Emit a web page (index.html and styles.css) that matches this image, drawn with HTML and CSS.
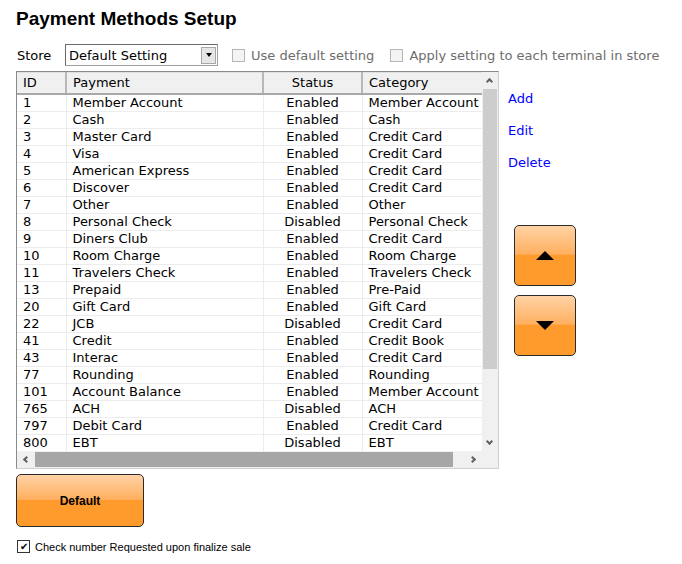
FILE: index.html
```html
<!DOCTYPE html>
<html lang="en">
<head>
    <meta charset="UTF-8">
    <title>Payment Methods Setup</title>
    <link rel="stylesheet" href="styles.css">
</head>
<body>
    <h1>Payment Methods Setup</h1>

    <div class="toolbar">
        <span class="store-label">Store</span>
        <div class="select">
            <span class="select-value">Default Setting</span>
            <span class="select-btn"><span class="caret"></span></span>
        </div>
        <label class="check disabled"><span class="box"></span>Use default setting</label>
        <label class="check disabled"><span class="box"></span>Apply setting to each terminal in store</label>
    </div>

    <div class="main">
        <div class="grid">
            <div class="grid-top">
                <div class="grid-view">
                    <table>
                        <thead>
                            <tr>
                                <th class="c-id">ID</th>
                                <th class="c-pay">Payment</th>
                                <th class="c-status">Status</th>
                                <th class="c-cat">Category</th>
                            </tr>
                        </thead>
                        <tbody>
                            <tr><td>1</td><td>Member Account</td><td class="center">Enabled</td><td>Member Account</td></tr>
                            <tr><td>2</td><td>Cash</td><td class="center">Enabled</td><td>Cash</td></tr>
                            <tr><td>3</td><td>Master Card</td><td class="center">Enabled</td><td>Credit Card</td></tr>
                            <tr><td>4</td><td>Visa</td><td class="center">Enabled</td><td>Credit Card</td></tr>
                            <tr><td>5</td><td>American Express</td><td class="center">Enabled</td><td>Credit Card</td></tr>
                            <tr><td>6</td><td>Discover</td><td class="center">Enabled</td><td>Credit Card</td></tr>
                            <tr><td>7</td><td>Other</td><td class="center">Enabled</td><td>Other</td></tr>
                            <tr><td>8</td><td>Personal Check</td><td class="center">Disabled</td><td>Personal Check</td></tr>
                            <tr><td>9</td><td>Diners Club</td><td class="center">Enabled</td><td>Credit Card</td></tr>
                            <tr><td>10</td><td>Room Charge</td><td class="center">Enabled</td><td>Room Charge</td></tr>
                            <tr><td>11</td><td>Travelers Check</td><td class="center">Enabled</td><td>Travelers Check</td></tr>
                            <tr><td>13</td><td>Prepaid</td><td class="center">Enabled</td><td>Pre-Paid</td></tr>
                            <tr><td>20</td><td>Gift Card</td><td class="center">Enabled</td><td>Gift Card</td></tr>
                            <tr><td>22</td><td>JCB</td><td class="center">Disabled</td><td>Credit Card</td></tr>
                            <tr><td>41</td><td>Credit</td><td class="center">Enabled</td><td>Credit Book</td></tr>
                            <tr><td>43</td><td>Interac</td><td class="center">Enabled</td><td>Credit Card</td></tr>
                            <tr><td>77</td><td>Rounding</td><td class="center">Enabled</td><td>Rounding</td></tr>
                            <tr><td>101</td><td>Account Balance</td><td class="center">Enabled</td><td>Member Account</td></tr>
                            <tr><td>765</td><td>ACH</td><td class="center">Disabled</td><td>ACH</td></tr>
                            <tr><td>797</td><td>Debit Card</td><td class="center">Enabled</td><td>Credit Card</td></tr>
                            <tr><td>800</td><td>EBT</td><td class="center">Disabled</td><td>EBT</td></tr>
                        </tbody>
                    </table>
                </div>
                <div class="vscroll">
                    <span class="chev up"></span>
                    <span class="vthumb"></span>
                    <span class="chev down"></span>
                </div>
            </div>
            <div class="grid-bottom">
                <div class="hscroll">
                    <span class="chev left"></span>
                    <span class="hthumb"></span>
                    <span class="chev right"></span>
                </div>
                <div class="corner"></div>
            </div>
        </div>

        <div class="side">
            <a href="#" class="link">Add</a>
            <a href="#" class="link">Edit</a>
            <a href="#" class="link">Delete</a>
            <div class="move-btns">
                <button class="orange-btn move-btn"><span class="tri tri-up"></span></button>
                <button class="orange-btn move-btn"><span class="tri tri-down"></span></button>
            </div>
        </div>
    </div>

    <button class="orange-btn default-btn">Default</button>

    <label class="check small"><span class="box checked">&#10004;</span>Check number Requested upon finalize sale</label>
</body>
</html>
```

FILE: styles.css
```css
* {
    margin: 0;
    padding: 0;
    box-sizing: border-box;
}

body {
    background: white;
    padding: 8px 16px;
    font-family: "DejaVu Sans", Verdana, sans-serif;
    font-size: 13px;
    color: #000;
}

h1 {
    font-family: "Liberation Sans", Arial, sans-serif;
    font-size: 19px;
    font-weight: bold;
    line-height: 22px;
    height: 36px;
}

/* store row */
.toolbar {
    display: flex;
    align-items: center;
    height: 22px;
    margin-bottom: 5px;
}

.store-label {
    margin-left: 1px;
    width: 48px;
}

.select {
    display: flex;
    align-items: center;
    justify-content: space-between;
    width: 153px;
    height: 22px;
    border: 1px solid #a0a0a0;
    border-top-color: #6a6a6a;
    border-left-color: #6a6a6a;
    padding: 0 1px 0 3px;
}

.select-btn {
    width: 15px;
    height: 17px;
    background: #e6e6e6;
    border: 1px solid #a8a8a8;
    display: flex;
    align-items: center;
    justify-content: center;
}

.caret {
    border-left: 3px solid transparent;
    border-right: 3px solid transparent;
    border-top: 4px solid #000;
}

.check {
    display: flex;
    align-items: center;
    gap: 6px;
    color: #6d6d6d;
    margin-left: 14px;
}

.check + .check {
    margin-left: 16px;
}

.box {
    width: 13px;
    height: 13px;
    border: 1px solid #b5b5b5;
    background: #f4f4f4;
}

/* grid */
.main {
    display: flex;
    align-items: flex-start;
}

.grid {
    width: 483px;
    border: 1px solid #8a8a8a;
    border-right-color: #d0d0d0;
    border-bottom-color: #d0d0d0;
}

.grid-top {
    display: flex;
}

.grid-view {
    width: 465px;
    height: 379px;
    overflow: hidden;
}

table {
    border-collapse: collapse;
    table-layout: fixed;
    width: 520px;
}

th {
    height: 21px;
    font-weight: normal;
    text-align: left;
    padding: 0 6px;
    background: #f0f0f0;
    border-left: 2px solid #b8b8b8;
    border-bottom: 2px solid #a8a8a8;
    border-top: 1px solid #e0e0e0;
    white-space: nowrap;
}

th.c-id {
    border-left: none;
}

th.c-status {
    text-align: center;
}

.c-id { width: 49px; }
.c-pay { width: 197px; }
.c-status { width: 99px; }
.c-cat { width: 175px; }

td {
    height: 17px;
    line-height: 16px;
    padding: 0 6px;
    border-left: 1px solid #ececec;
    border-bottom: 1px solid #ececec;
    white-space: nowrap;
    overflow: hidden;
}

td:first-child {
    border-left: none;
}

td.center {
    text-align: center;
}

/* scroll bars */
.vscroll {
    width: 16px;
    height: 379px;
    background: #f0f0f0;
    position: relative;
}

.vthumb {
    position: absolute;
    left: 1px;
    right: 1px;
    top: 17px;
    height: 280px;
    background: #cdcdcd;
}

.grid-bottom {
    display: flex;
    height: 17px;
}

.hscroll {
    width: 465px;
    background: #f0f0f0;
    position: relative;
}

.hthumb {
    position: absolute;
    top: 1px;
    bottom: 1px;
    left: 18px;
    width: 418px;
    background: #a6a6a6;
}

.corner {
    width: 16px;
    background: #f0f0f0;
}

.chev {
    position: absolute;
    width: 5px;
    height: 5px;
    border-left: 2px solid #606060;
    border-top: 2px solid #606060;
}

.chev.up {
    left: 5px;
    top: 7px;
    transform: rotate(45deg);
}

.chev.down {
    left: 5px;
    bottom: 7px;
    transform: rotate(225deg);
}

.chev.left {
    left: 7px;
    top: 6px;
    transform: rotate(-45deg);
}

.chev.right {
    right: 7px;
    top: 6px;
    transform: rotate(135deg);
}

/* side actions */
.side {
    display: flex;
    flex-direction: column;
    align-items: flex-start;
    margin-left: 9px;
    padding-top: 20px;
}

.link {
    color: #0000ff;
    text-decoration: none;
    line-height: 16px;
    margin-bottom: 16px;
}

.move-btns {
    display: flex;
    flex-direction: column;
    gap: 9px;
    margin-top: 38px;
    margin-left: 6px;
}

.orange-btn {
    border: 1px solid #2a2a2a;
    border-radius: 5px;
    background: linear-gradient(to bottom, #ffd3a6 0%, #ffaf5f 48%, #ff9a2c 49%, #ff9a2c 100%);
    cursor: pointer;
    display: flex;
    align-items: center;
    justify-content: center;
}

.move-btn {
    width: 62px;
    height: 61px;
}

.tri {
    width: 0;
    height: 0;
    border-left: 9px solid transparent;
    border-right: 9px solid transparent;
}

.tri-up {
    border-bottom: 9px solid #000;
}

.tri-down {
    border-top: 9px solid #000;
}

.default-btn {
    width: 128px;
    height: 53px;
    margin-top: 5px;
    font-family: "Liberation Sans", Arial, sans-serif;
    font-weight: bold;
    font-size: 12px;
    color: #000;
}

.check.small {
    margin: 13px 0 0 1px;
    color: #000;
    font-family: "Liberation Sans", Arial, sans-serif;
    font-size: 11px;
    gap: 5px;
}

.box.checked {
    border-color: #333;
    background: white;
    font-size: 10px;
    line-height: 11px;
    text-align: center;
}
```
